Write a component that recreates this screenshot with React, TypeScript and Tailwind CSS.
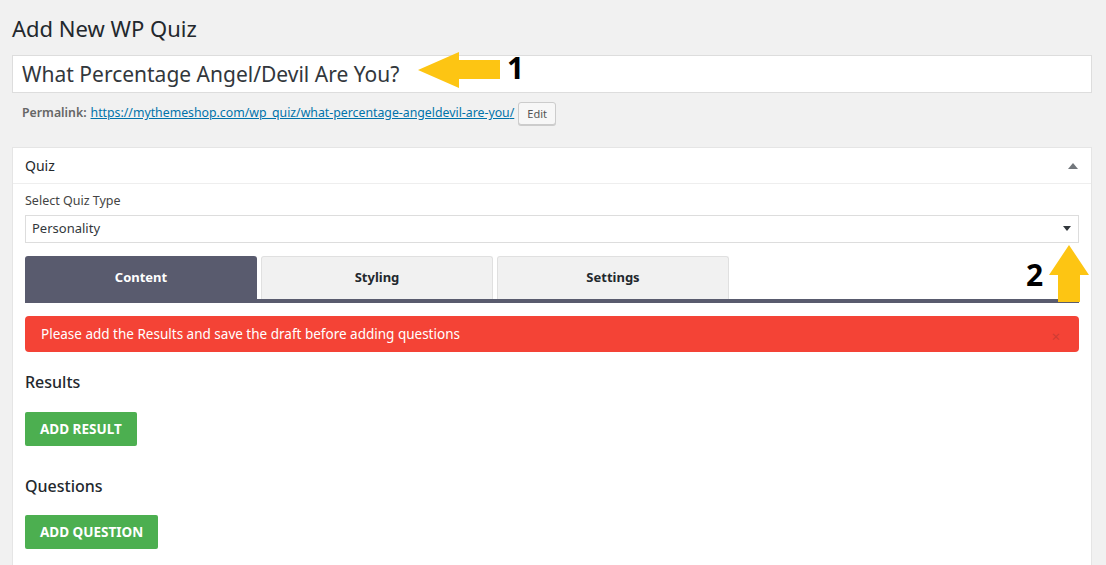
import React from 'react'

const FONT = { fontFamily: '"Noto Sans", "Open Sans", sans-serif' }

function LeftArrow() {
  // yellow annotation arrow pointing at the title field
  return (
    <svg width="84" height="38" viewBox="0 0 84 38" className="absolute left-[417px] top-[51px]">
      <polygon points="1,19 42,1 42,9 83,9 83,28 42,28 42,37" fill="#fdc513" />
    </svg>
  )
}

function UpArrow() {
  return (
    <svg width="42" height="58" viewBox="0 0 42 58" className="absolute left-[1048px] top-[244px]">
      <polygon points="21,1 41,31 32,31 32,58 10,58 10,31 1,31" fill="#fdc513" />
    </svg>
  )
}

export default function App() {
  return (
    <div className="relative min-h-[565px] w-[1106px] overflow-hidden bg-[#f1f1f1] text-[#23282d]" style={FONT}>
      <div className="px-3 pt-[14px]">
        <h1 className="text-[22px] leading-[29px] font-normal text-[#23282d]">Add New WP Quiz</h1>

        {/* title field */}
        <div className="mt-[12px] h-[38px] w-[1080px] border border-[#dddddd] bg-white pl-[9px] flex items-center">
          <span className="text-[21px] text-[#32373c] leading-none">What Percentage Angel/Devil Are You?</span>
        </div>

        {/* permalink */}
        <div className="mt-[9px] flex items-center pl-[10px] text-[12.3px] text-[#666]">
          <span className="font-semibold">Permalink:</span>
          <a className="ml-1 text-[#0073aa] underline">https://mythemeshop.com/wp_quiz/<span>what-percentage-angeldevil-are-you</span>/</a>
          <span className="ml-[4px] h-[23px] rounded-[3px] border border-[#cccccc] bg-[#f7f7f7] px-[8px] text-[11px] leading-[21px] text-[#555] shadow-[0_1px_0_#ccc]">Edit</span>
        </div>

        {/* quiz postbox */}
        <div className="mt-[22px] w-[1080px] border border-[#e5e5e5] bg-white">
          <div className="flex h-[36px] items-center justify-between border-b border-[#eeeeee] px-3">
            <span className="text-[14px] text-[#23282d]">Quiz</span>
            <svg width="10" height="6" viewBox="0 0 10 6" className="mr-[1px]">
              <polygon points="5,0 10,6 0,6" fill="#72777c" />
            </svg>
          </div>

          <div className="px-3 pt-[8px] pb-[20px]">
            <div className="text-[12.5px] text-[#444]">Select Quiz Type</div>
            <div className="mt-[4px] flex h-[28px] items-center justify-between border border-[#dddddd] bg-white pl-[6px] pr-[7px]">
              <span className="text-[13px] text-[#32373c]">Personality</span>
              <svg width="8" height="5" viewBox="0 0 8 5">
                <polygon points="0,0 8,0 4,5" fill="#32373c" />
              </svg>
            </div>

            {/* tabs */}
            <div className="mt-[13px] border-b-4 border-[#595b6e]">
              <div className="flex gap-[4px]">
                <div className="flex h-[43px] w-[232px] items-center justify-center rounded-t-[3px] bg-[#595b6e] text-[13px] font-bold text-white">Content</div>
                <div className="flex h-[43px] w-[232px] items-center justify-center rounded-t-[3px] border border-b-0 border-[#e0e0e0] bg-[#f1f1f1] text-[13px] font-bold text-[#23282d]">Styling</div>
                <div className="flex h-[43px] w-[232px] items-center justify-center rounded-t-[3px] border border-b-0 border-[#e0e0e0] bg-[#f1f1f1] text-[13px] font-bold text-[#23282d]">Settings</div>
              </div>
            </div>

            {/* notice */}
            <div className="mt-[13px] flex h-[36px] items-center justify-between rounded-[4px] bg-[#f44336] pl-[16px] pr-[19px]">
              <span className="text-[13.5px] text-white">Please add the Results and save the draft before adding questions</span>
              <span className="mt-[6px] text-[15px] leading-none text-[#cf3c33]">×</span>
            </div>

            <h2 className="mt-[18px] text-[16px] font-medium text-[#23282d]">Results</h2>
            <button className="mt-[18px] h-[34px] rounded-[2px] bg-[#4caf50] px-[15px] text-[13.5px] font-bold text-white">ADD RESULT</button>

            <h2 className="mt-[28px] text-[16px] font-medium text-[#23282d]">Questions</h2>
            <button className="mt-[17px] h-[34px] rounded-[2px] bg-[#4caf50] px-[15px] text-[13.5px] font-bold text-white">ADD QUESTION</button>
          </div>
        </div>
      </div>

      {/* annotations */}
      <LeftArrow />
      <span className="absolute left-[507px] top-[48px] text-[30px] font-bold leading-[40px] text-black">1</span>
      <UpArrow />
      <span className="absolute left-[1026px] top-[255px] text-[30px] font-bold leading-[40px] text-black">2</span>
    </div>
  )
}
